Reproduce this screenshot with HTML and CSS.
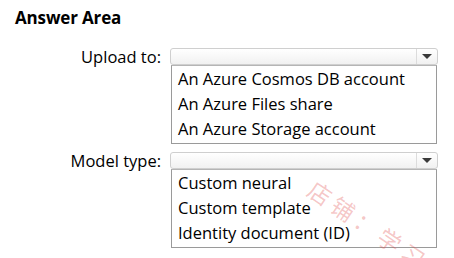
FILE: index.html
```html
<!DOCTYPE html>
<html>
<head>
<meta charset="utf-8">
<link rel="stylesheet" href="styles.css">
</head>
<body>
<div class="page">
  <h2 class="title">Answer Area</h2>
  <div class="form">
    <div class="label">Upload to:</div>
    <div class="control">
      <div class="select"><span class="select-value"></span><span class="select-btn"><span class="arrow"></span></span></div>
      <ul class="options">
        <li>An Azure Cosmos DB account</li>
        <li>An Azure Files share</li>
        <li>An Azure Storage account</li>
      </ul>
    </div>
    <div class="label">Model type:</div>
    <div class="control">
      <div class="select"><span class="select-value"></span><span class="select-btn"><span class="arrow"></span></span></div>
      <ul class="options">
        <li>Custom neural</li>
        <li>Custom template</li>
        <li>Identity document (ID)</li>
      </ul>
    </div>
  </div>
  <div class="watermark">店铺：学习</div>
</div>
</body>
</html>
```
FILE: styles.css
```css
html, body {
  margin: 0;
  padding: 0;
  background: #ffffff;
}
.page {
  position: relative;
  width: 454px;
  height: 258px;
  overflow: hidden;
  font-family: "Open Sans", "Noto Sans", sans-serif;
  color: #000;
}
.title {
  margin: 0;
  padding: 8px 0 0 15px;
  font-size: 17px;
  line-height: 20px;
  font-weight: 700;
  letter-spacing: -0.15px;
}
.form {
  display: grid;
  grid-template-columns: 162px 268px;
  column-gap: 8px;
  row-gap: 8px;
  margin-top: 20px;
}
.label {
  text-align: right;
  font-size: 16.5px;
  line-height: 17px;
  padding-right: 1px;
}
.control {
  display: flex;
  flex-direction: column;
}
.select {
  display: flex;
  height: 17px;
  box-sizing: border-box;
  border: 1px solid #cfcfcf;
  border-radius: 3px;
  background: linear-gradient(#ffffff, #f1f1f1);
}
.select-value {
  flex: 1;
}
.select-btn {
  width: 20px;
  border-left: 1px solid #dcdcdc;
  display: flex;
  align-items: center;
  justify-content: center;
}
.arrow {
  width: 0;
  height: 0;
  border-left: 5px solid transparent;
  border-right: 5px solid transparent;
  border-top: 5px solid #3a3a3a;
}
.options {
  list-style: none;
  margin: 0 1px;
  padding: 0 0 2px 6px;
  border: 1px solid #9a9a9a;
  border-top-color: #b5b5b5;
  font-size: 16.5px;
  line-height: 25px;
}
.watermark {
  position: absolute;
  left: 311px;
  top: 173px;
  font-family: "Noto Sans CJK SC", sans-serif;
  font-size: 23px;
  line-height: 26px;
  letter-spacing: 5px;
  color: rgba(225, 80, 80, 0.32);
  transform: rotate(34deg);
  transform-origin: 0 50%;
  white-space: nowrap;
}
```
